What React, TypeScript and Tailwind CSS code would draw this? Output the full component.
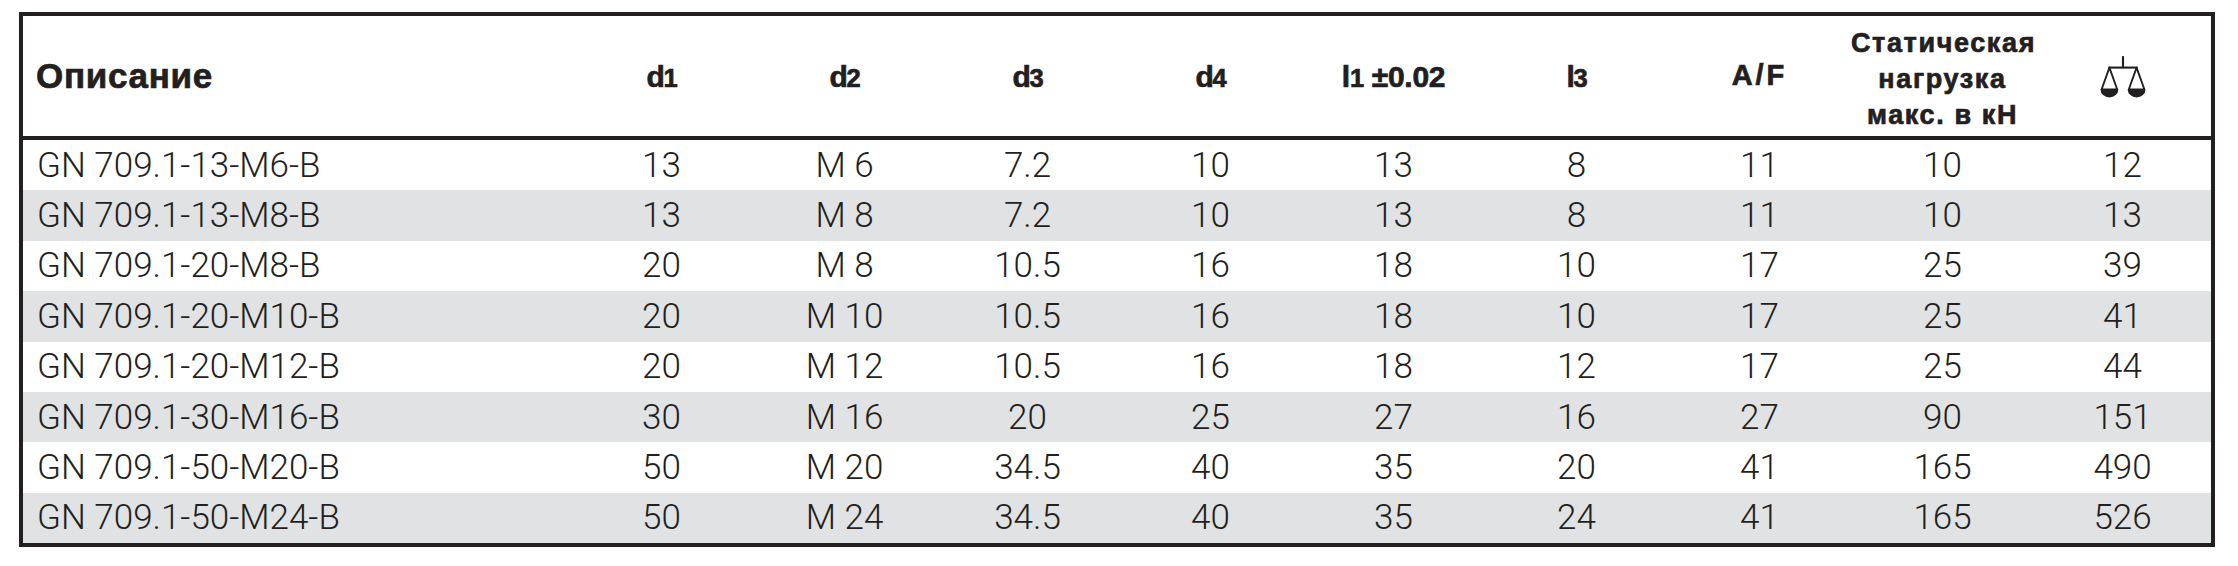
import React from "react";

const rows: string[][] = [
  ["GN 709.1-13-M6-B", "13", "M 6", "7.2", "10", "13", "8", "11", "10", "12"],
  ["GN 709.1-13-M8-B", "13", "M 8", "7.2", "10", "13", "8", "11", "10", "13"],
  ["GN 709.1-20-M8-B", "20", "M 8", "10.5", "16", "18", "10", "17", "25", "39"],
  ["GN 709.1-20-M10-B", "20", "M 10", "10.5", "16", "18", "10", "17", "25", "41"],
  ["GN 709.1-20-M12-B", "20", "M 12", "10.5", "16", "18", "12", "17", "25", "44"],
  ["GN 709.1-30-M16-B", "30", "M 16", "20", "25", "27", "16", "27", "90", "151"],
  ["GN 709.1-50-M20-B", "50", "M 20", "34.5", "40", "35", "20", "41", "165", "490"],
  ["GN 709.1-50-M24-B", "50", "M 24", "34.5", "40", "35", "24", "41", "165", "526"],
];

function Scale() {
  return (
    <svg width="46" height="42" viewBox="0 0 44 40" fill="none">
      <line x1="22" y1="0" x2="22" y2="11" stroke="#231f20" strokeWidth="2" />
      <line x1="8" y1="11" x2="36" y2="11" stroke="#231f20" strokeWidth="2" />
      <path d="M9 11 L1.5 32 L16.5 32 Z" stroke="#231f20" strokeWidth="1.8" strokeLinejoin="round" />
      <path d="M35 11 L27.5 32 L42.5 32 Z" stroke="#231f20" strokeWidth="1.8" strokeLinejoin="round" />
      <path d="M0.5 32 A8.5 7.5 0 0 0 17.5 32 Z" fill="#231f20" />
      <path d="M26.5 32 A8.5 7.5 0 0 0 43.5 32 Z" fill="#231f20" />
    </svg>
  );
}

function Sub({ base, sub, rest }: { base: string; sub: string; rest?: string }) {
  return (
    <span>
      {base}
      <span className="text-[0.85em]">{sub}</span>
      {rest}
    </span>
  );
}

export default function App() {
  const headFont = { fontFamily: '"Liberation Sans", Arial, sans-serif' };
  const numFont = { fontFamily: 'Roboto, "Liberation Sans", sans-serif' };
  return (
    <div className="w-[2238px] h-[566px] bg-white pt-[12px] pl-[19px]">
      <div className="w-[2196px] border-4 border-[#231f20] text-[#231f20]">
        <div
          className="grid grid-cols-[547px_repeat(8,183px)_177px] h-[124px] border-b-4 border-[#231f20] items-center font-bold [-webkit-text-stroke:0.7px_#231f20]"
          style={headFont}
        >
          <div className="pl-[13px] text-[35px] tracking-[0.02em]">Описание</div>
          <div className="text-center text-[30px] tracking-[-0.04em]"><Sub base="d" sub="1" /></div>
          <div className="text-center text-[30px] tracking-[-0.04em]"><Sub base="d" sub="2" /></div>
          <div className="text-center text-[30px] tracking-[-0.04em]"><Sub base="d" sub="3" /></div>
          <div className="text-center text-[30px] tracking-[-0.04em]"><Sub base="d" sub="4" /></div>
          <div className="text-center text-[30px] tracking-[-0.01em]"><Sub base="l" sub="1" rest=" ±0.02" /></div>
          <div className="text-center text-[30px] tracking-[-0.04em]"><Sub base="l" sub="3" /></div>
          <div className="text-center text-[29px] tracking-[0.1em]">A/F</div>
          <div className="text-center text-[27px] leading-[36px] tracking-[0.06em] pt-[6px]">
            Статическая
            <br />
            нагрузка
            <br />
            макс. в кН
          </div>
          <div className="flex justify-center pt-[2px]">
            <Scale />
          </div>
        </div>
        {rows.map((r, i) => (
          <div
            key={i}
            className={`grid grid-cols-[547px_repeat(8,183px)_177px] h-[50.4px] items-center font-light text-[35px] leading-none ${
              i % 2 === 1 ? "bg-[#e1e2e4]" : "bg-white"
            }`}
            style={numFont}
          >
            {r.map((c, j) => (
              <div key={j} className={j === 0 ? "pl-[14px]" : "text-center"}>
                {c}
              </div>
            ))}
          </div>
        ))}
      </div>
    </div>
  );
}
